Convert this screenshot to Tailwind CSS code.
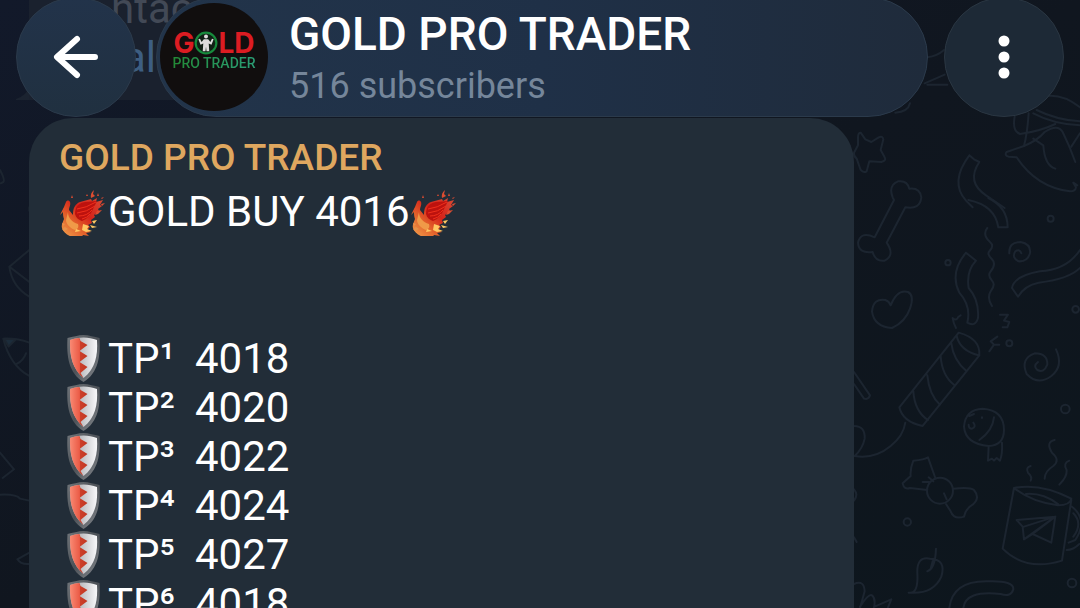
<!DOCTYPE html>
<html lang="en">
<head>
    <meta charset="UTF-8">
    <meta name="viewport" content="width=device-width, initial-scale=1.0">
    <title>GOLD PRO TRADER</title>
    <script src="https://cdn.jsdelivr.net/npm/@tailwindcss/browser@4"></script>
</head>
<body class="relative h-screen overflow-hidden bg-linear-to-br from-[#12192a] via-[#10161f] to-[#0d161d] font-['Roboto',sans-serif] text-white">

    <!-- Chat wallpaper -->
    <svg class="absolute inset-0 w-full h-full" viewBox="0 0 1080 608" preserveAspectRatio="xMaxYMin slice" fill="none" stroke="#1c2530" stroke-width="6" stroke-linecap="round" stroke-linejoin="round" aria-hidden="true">
        <g transform="translate(840 0) scale(.3333)">
            <!-- star -->
            <path d="M62 398q-8 0-8 14v24l-12 22q-2 10 8 18l12 34q8 10 18 4l8-30 36 2q16-4 10-14l-12-22 8-32q-2-12-14-6l-22 14-18-8z"/>
            <!-- plate and bird -->
            <path d="M262 172q30-4 50-22M254 250l60-26M262 254h60M210 310q-6 26-44 28M620 288q50-6 100 34M590 330q60 30 130 34M580 340q60 32 140 36M524 350q-8 44 16 52 60-8 106-30M566 340q-4 60-14 98M720 400l-26 40"/>
            <path d="M500 456q-8 10 6 14l24 2q60 90 160 102 16 0 18-12l-8-14 12 8M500 456l52-18q40-16 62-42 40-26 54 0 20 40 38 90M580 416q18 12 30 20 4 60 36 70"/>
            <!-- streamer -->
            <path d="M388 466q-60 80-10 136l20 20M418 486q-40 60 20 100l56 38M388 466l14 12 16 8"/>
        </g>
        <g transform="translate(840 200) scale(.3333)">
            <!-- bone -->
            <path d="M162 0l-58 112q-42-20-50 16 2 34 44 28 8 30 36 26 32-16 6-54L196 22q44 8 48-30-4-30-36-26-6-26-34-22-30 12-16 48z"/>
            <path d="M385 0q80 16 90 82h28q0-60-58-88"/>
            <path d="M442 84q-16 20 8 42 14 12-2 28-8 8 8 24 14 14-4 36-10 12 4 28 12 12-4 32-12 20 4 44"/>
            <path d="M378 158q-50 60-20 120 36 40 24 90 24 14 32-14 4-54-28-90-8-50 22-82z"/>
            <path d="M508 160q-2-34 34-34 32 6 28 34-8 26-34 24-22-10-10-30 14-8 18 6"/>
            <path d="M720 150q-40 60-120 64-78 14-84 50l18 26q20-34 62-42 90-10 124-44"/>
            <path d="M152 316q20-50 52-40 20 10 6 50-14 40-54 58-54-4-60-50 4-40 40-34 12 4 16 16z"/>
            <path d="M338 354q2 16 10 30M338 356q14 6 16-4l8-6M480 344h24l-12 18 16 4-6 16h-14M472 410l-20 14 10 10h16M462 434l-14 20"/>
            <!-- party popper -->
            <path d="M356 398L178 622q10 44 70 56l170-212q4-50-62-68zM350 408q10 44 66 58M334 430q6 50 46 84M302 468q4 60 42 88M262 526q6 60 38 88M220 574q4 60 44 86"/>
            <path d="M648 448q24 50-14 80-40 30-74-6-20-46 24-62 40 0 38 34-10 26-30 16-14-12 2-24"/>
            <path d="M42 516l48 70q-4 14-18 10L42 552"/>
            <circle cx="632" cy="56" r="9"/><circle cx="324" cy="188" r="8"/><circle cx="707" cy="328" r="10"/><circle cx="508" cy="430" r="9"/>
        </g>
        <g transform="translate(840 400) scale(.3333)">
            <path d="M42 78q34 0 32 38-6 30-30 52 60 10 108-30 38-30 44-70"/>
            <!-- mushroom face -->
            <path d="M372 80q4-52 56-54 64 4 64 64 0 46-46 48-70-6-74-58zM462 52q-4 40-44 68M446 138l-2 44 12-6 6 6 8-8 10 8q8-20 6-54M400 68q10 12-4 18-10 0-10-12M426 52v2M388 48l14-6"/>
            <!-- candy -->
            <circle cx="300" cy="272" r="39"/>
            <path d="M286 234l-22-62q-10 8-44 10-10 24-8 46l-24 22q4 20 22 14l52 6M248 246h20M266 232l14 12M340 266q50-6 62 4 20 24-4 44-20 10-26 36-30 10-40-16l-14-22M312 280l8 18"/>
            <circle cx="202" cy="366" r="11"/><circle cx="676" cy="27" r="13"/><circle cx="696" cy="549" r="13"/>
            <!-- mug -->
            <path d="M522 264q80-16 172 32-4 20-40 20-80-10-132-52l-34 182q70 70 178 36l28-182M558 282q50-4 96 30M696 320q50 40 10 100l-20 8M700 340q30 30 0 70M680 450q20 0 38-18"/>
            <path d="M530 360l116-10-12 78-56-26-26 16-4-38zM552 380l94-30-68 52M646 350l-94 68"/>
            <path d="M644 120q-28 6-8 38 26 22 4 40-26 16-26 38M688 182q-20 8-8 28 2 20-22 44M572 198q-16 4-8 20 14 12 8 24"/>
            <!-- chili, tail and leaves -->
            <path d="M206 578q30 6 26-60-2-50 38-42 50 2 34 54-24 54-98 48zM288 446q-2 60-26 68M280 476l-8 30"/>
            <path d="M328 624q10-84 120-80 74-2 72 24-6 24-38 14-106-12-112 42M42 552q30-14 32 22l-14 50M60 620q26-40 36-34 12 10 6 36M104 620l50-22-10 24M42 268q14 16 0 34M42 412l8 14"/>
        </g>
        <g transform="translate(0 120) scale(.3333)">
            <path d="M0 150q16 30 10 36l-8 4M88 262v10M88 390l-60 50q8 60 60 90M28 440l60 46M10 656q40-2 78 12M10 656q20 80 78 112M50 732q20-10 28-32M0 998l42 50-34 26M0 1124q50-2 60 12l28 6M88 1298l-36 20q10 16 36 14"/>
            <path d="M12 656l36 2-22 22z" fill="#1c2c3b"/>
        </g>
    </svg>

    <!-- Shared drawings -->
    <svg class="absolute size-0" aria-hidden="true">
        <defs>
            <linearGradient id="fire" x1="0" y1="1" x2="1" y2="0">
                <stop offset="0" stop-color="#f5a850"/>
                <stop offset=".35" stop-color="#e2602a"/>
                <stop offset=".6" stop-color="#d5231a"/>
                <stop offset="1" stop-color="#d94a34"/>
            </linearGradient>
            <linearGradient id="rim" x1="0" y1="0" x2="1" y2="1">
                <stop offset="0" stop-color="#6f7479"/>
                <stop offset=".5" stop-color="#4c5157"/>
                <stop offset="1" stop-color="#8b8f94"/>
            </linearGradient>
            <linearGradient id="steel" x1="0" y1="0" x2="1" y2="0">
                <stop offset=".3" stop-color="#b4b5b9"/>
                <stop offset="1" stop-color="#f8f8fa"/>
            </linearGradient>
            <linearGradient id="red" x1="0" y1="0" x2="1" y2="0">
                <stop offset="0" stop-color="#f98a74"/>
                <stop offset=".5" stop-color="#ec5f4a"/>
                <stop offset=".6" stop-color="#cc3f2a"/>
                <stop offset="1" stop-color="#c23620"/>
            </linearGradient>
        </defs>
        <symbol id="phoenix" viewBox="0 0 49 49">
            <path d="M5 20l2-5c1-2 3-2 4 0 1 3-1 5-1 8l4 5c0-7 2-11 7-13l11-3 1 2 5-3-1 4 7-2-3 5 2 1-4 3 1 2-5 4 1 2-4 3 1 3-4 2 2 2-3 3 4 2-5 1 3 3-6-1-2 3-4-2-5 1c-5-2-9-5-10-9-1-3 1-6 2-9-1-3-1-5-1-7l-3 3z" fill="url(#fire)"/>
            <path d="M16 27c0-8 4-11 10-12l12-1-3 6-3 6-5 6-4 2c-3-1-6-3-7-7z" fill="#bd120e"/>
            <path d="M18 22q9-1 19-7M18 26q10-1 18-7M20 29q8 0 13-6M23 32q5-1 8-5" stroke="#f0301c" stroke-width="1" fill="none"/>
            <path d="M9 25c0 6 4 10 10 12 1 3 0 5-3 6-5-2-9-6-9-10z" fill="#f09a48"/>
            <path d="M24 37l6 2-2 3 5 2-6 1-4-2zM33 34l5-1-3 4zM31 38l7 2-5 1zM17 42l5 2-6 1z" fill="#ffc862"/>
            <path d="M3 42l3-2 3 2-4 2zM3 36l3 1-2 2z" fill="#e8924a"/>
            <path d="M32 11q-1-5 3-8l-1 4 2 2zM38 9l1-3 1 3zM42 11l3-1-2 2zM12 11l1-3 1 3zM3 25l2-4 1 2zM38 24l5-1-4 4-3 1zM42 17l4-1-3 3zM27 9l1-2 1 2z" fill="#dd4c30"/>
        </symbol>
        <symbol id="shield" viewBox="0 0 48 49">
            <path d="M24 1c5 0 11 2 16 3 1 18-1 35-16 44C9 39 7 22 8 4c5-1 11-3 16-3z" fill="url(#rim)"/>
            <path d="M24 3.500c5 0 9 1 13.500 2.500 1 16-2 29-13.500 38C13 35 10 22 10.500 6 15 4.500 19 3.500 24 3.500z" fill="url(#steel)"/>
            <path d="M20 4l1 3 7 4-8 6 8 5-8 6 8 5-7 6 3 5C13 35 10 22 10.500 6 14 4.700 17 4 20 4z" fill="url(#red)"/>
            <path d="M20 17v-11M20 17v11M20 28v11" stroke="#e85a45"/>
        </symbol>
    </svg>

    <!-- Messages -->
    <main class="relative -mt-4 flex flex-col gap-[18px]">
        <article class="flex items-end pl-4">
            <svg class="w-[13px] h-[13px]" viewBox="0 0 13 13" aria-hidden="true"><path d="M13 0Q11 8 0 12v1h13z" fill="#1b2330"/></svg>
            <div class="w-1/2 bg-[#1a212e] pl-[82px] pb-[18px] text-[42px] leading-[49px]">
                <p class="text-[#424956]">ntac</p>
                <p class="pl-3 text-[#3d5e82]">al</p>
            </div>
        </article>

        <article class="ml-[29px] w-[825px] max-w-4/5 rounded-t-[44px] bg-[#222d38] px-[30px] pt-[18px] pb-8">
            <h2 class="text-[37px] leading-[44px] font-medium text-[#dfa75f]">GOLD PRO TRADER</h2>
            <div class="mt-[7px] text-[42px] leading-[49px]">
                <p class="flex">
                    <svg class="size-[49px]" role="img" aria-label="phoenix"><use href="#phoenix"/></svg>
                    <span>GOLD BUY 4016</span>
                    <svg class="size-[49px]" role="img" aria-label="phoenix"><use href="#phoenix"/></svg>
                </p>
                <ul class="mt-[98px]">
                    <li class="flex"><svg class="size-[49px]" aria-hidden="true"><use href="#shield"/></svg><span class="w-[87px]">TP¹</span><span>4018</span></li>
                    <li class="flex"><svg class="size-[49px]" aria-hidden="true"><use href="#shield"/></svg><span class="w-[87px]">TP²</span><span>4020</span></li>
                    <li class="flex"><svg class="size-[49px]" aria-hidden="true"><use href="#shield"/></svg><span class="w-[87px]">TP³</span><span>4022</span></li>
                    <li class="flex"><svg class="size-[49px]" aria-hidden="true"><use href="#shield"/></svg><span class="w-[87px]">TP⁴</span><span>4024</span></li>
                    <li class="flex"><svg class="size-[49px]" aria-hidden="true"><use href="#shield"/></svg><span class="w-[87px]">TP⁵</span><span>4027</span></li>
                    <li class="flex"><svg class="size-[49px]" aria-hidden="true"><use href="#shield"/></svg><span class="w-[87px]">TP⁶</span><span>4018</span></li>
                </ul>
            </div>
        </article>
    </main>

    <!-- Floating header -->
    <header class="absolute inset-x-0 -top-[3px] flex px-4">
        <button type="button" aria-label="Back" class="size-[120px] shrink-0 rounded-full border border-[#2b3a4b] bg-linear-to-b from-[#22334a] to-[#203040] flex items-center justify-center">
            <svg class="size-12" viewBox="0 0 48 48" fill="none" stroke="#fff" stroke-width="6" stroke-linecap="round" stroke-linejoin="round" aria-hidden="true"><path d="M43 24H6M25 6L5 24l20 18"/></svg>
        </button>

        <div class="ml-5 mr-4 flex-1 min-w-0 h-[120px] rounded-full border border-[#2b3a4b] bg-linear-to-r from-[#22344a] via-[#1f3047] to-[#1f2b3b] flex items-center pl-[3px]">
            <div class="size-[108px] shrink-0 rounded-full bg-[#110e0e] flex flex-col items-center justify-center">
                <div class="-mt-3 flex items-center font-['Inter',sans-serif] text-[28px] leading-[24px] font-bold text-[#dc1c22]">
                    <span>G</span>
                    <svg class="size-[24px]" viewBox="0 0 22 22" aria-hidden="true">
                        <circle cx="11" cy="11" r="9.500" fill="#102015" stroke="#178a3c" stroke-width="2"/>
                        <circle cx="11" cy="5" r="1.800" fill="#ddd"/>
                        <path d="M4 7.500l1.500-.5 1.500 3 2-2.500h4l2 2.500 1.500-3 1.500.5-2 5-2.500-1 .5 7h-2.500l-.5-4-.5 4H8l.5-7-2.500 1z" fill="#ddd"/>
                    </svg>
                    <span>LD</span>
                </div>
                <span class="text-sm leading-4 bg-linear-to-r from-[#238a34] to-[#2b9f76] bg-clip-text text-transparent font-medium">PRO TRADER</span>
            </div>
            <div class="ml-[21px] mt-[6px]">
                <h1 class="text-[46px] leading-[52px] font-medium whitespace-nowrap">GOLD PRO TRADER</h1>
                <p class="text-[36px] leading-[52px] text-[#75869a]">516 subscribers</p>
            </div>
        </div>

        <button type="button" aria-label="More options" class="size-[120px] shrink-0 rounded-full border border-[#2a3642] bg-[#1d2936] flex items-center justify-center">
            <svg class="size-12" viewBox="0 0 48 48" fill="#fff" aria-hidden="true"><circle cx="24" cy="8" r="5.500"/><circle cx="24" cy="24" r="5.500"/><circle cx="24" cy="40" r="5.500"/></svg>
        </button>
    </header>
</body>
</html>
